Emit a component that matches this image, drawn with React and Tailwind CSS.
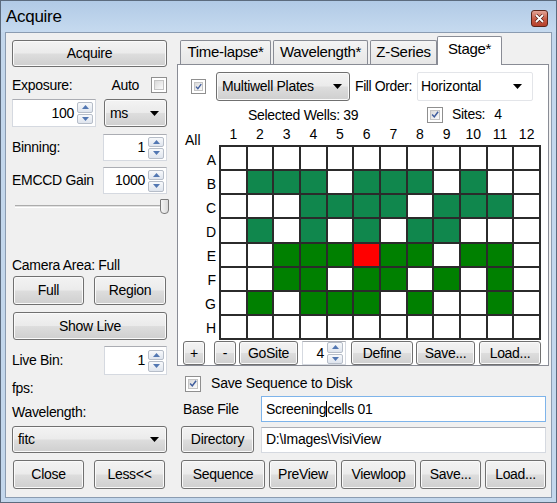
import React from 'react';
import clsx from 'clsx';

const BTN_BG = 'bg-[linear-gradient(#f3f3f3,#ebebeb_48%,#dddddd_52%,#cfcfcf)]';

const Btn = ({ className, children }) => (
  <div
    className={clsx(
      'flex items-center justify-center rounded-[3px] border border-[#707070] shadow-[inset_0_0_0_1px_#fafafa] text-[14px] tracking-[-0.3px] shrink-0',
      BTN_BG,
      className
    )}
  >
    {children}
  </div>
);

const Arrow = () => (
  <svg width="9" height="5" viewBox="0 0 9 5" className="shrink-0">
    <path d="M0 0 L9 0 L4.5 5 Z" fill="#000" />
  </svg>
);

const Combo = ({ className, children }) => (
  <div
    className={clsx(
      'flex items-center justify-between rounded-[3px] border border-[#707070] shadow-[inset_0_0_0_1px_#fafafa] pl-[5px] pr-[7px] text-[14px] tracking-[-0.3px] shrink-0',
      BTN_BG,
      className
    )}
  >
    <span>{children}</span>
    <Arrow />
  </div>
);

const SpinArrows = () => (
  <div className="flex flex-col gap-px w-[16px] h-[22px] shrink-0">
    {[0, 1].map((i) => (
      <div
        key={i}
        className="flex-1 flex items-center justify-center rounded-[2px] border border-[#b6bdc8] bg-[linear-gradient(#f7f9fb,#dfe5ee)]"
      >
        <svg width="7" height="4" viewBox="0 0 7 4">
          <path d={i === 0 ? 'M0 4 L3.5 0 L7 4 Z' : 'M0 0 L7 0 L3.5 4 Z'} fill="#5277b2" />
        </svg>
      </div>
    ))}
  </div>
);

const Spin = ({ value, className }) => (
  <div
    className={clsx(
      'flex items-center justify-end gap-[3px] pr-[2px] border border-[#d5d9e0] border-t-[#abadb3] bg-white text-[14px] tracking-[-0.3px] shrink-0',
      className
    )}
  >
    <span>{value}</span>
    <SpinArrows />
  </div>
);

const Check = ({ checked, size = 'w-[15px] h-[15px]' }) => (
  <div className={clsx('border border-[#8f8f8f] bg-white p-[2px] shrink-0', size)}>
    <div className="w-full h-full border border-[#c4c4c4] bg-[linear-gradient(135deg,#d9d9d9,#fbfbfb)] flex items-center justify-center">
      {checked && (
        <svg width="9" height="9" viewBox="0 0 9 9">
          <path d="M1.3 4.6 L3.7 7.2 L8 1.4" stroke="#3f5d9d" strokeWidth="1.7" fill="none" />
        </svg>
      )}
    </div>
  </div>
);

const Tab = ({ label, active, className }) => (
  <div
    className={clsx(
      'flex items-center justify-center border border-b-0 border-[#898c95] text-[15px] tracking-[-0.3px] shrink-0',
      active
        ? 'h-[29px] bg-white relative z-10 -mb-px rounded-t-[2px] pb-[4px]'
        : 'h-[24px] bg-[linear-gradient(#f4f4f4,#e6e6e6)] rounded-t-[2px]',
      className
    )}
  >
    {label}
  </div>
);

const WELLS = [
  '............',
  '.TTT.TTT.T..',
  '...TTTT.TTT.',
  '.T.T.T.TT...',
  '..GGGRGG.GG.',
  '..GG.GG.G.G.',
  '.G.GGG.G..G.',
  '............',
];

const CELL = { '.': 'bg-white', T: 'bg-[#10874d]', G: 'bg-[#008000]', R: 'bg-[#ff0000]' };

const LEFT = 'text-[14px] tracking-[-0.3px]';

export default function App() {
  return (
    <div className="w-[557px] h-[503px] border border-[#5c6b7e] bg-[#c3d7ec] flex flex-col font-['Liberation_Sans',Arial,sans-serif] text-black overflow-hidden">
      {/* title bar */}
      <div className="h-[31px] flex items-center justify-between pl-[5px] pr-[8px] bg-[linear-gradient(#b1cae6,#c6daef)]">
        <span className="text-[17px] tracking-[-0.3px]">Acquire</span>
        <div className="mt-[3px] w-[17px] h-[17px] rounded-[3px] border border-[#5b2419] bg-[linear-gradient(#e3a496,#c75a44_55%,#b5412c)] flex items-center justify-center">
          <svg width="9" height="9" viewBox="0 0 9 9">
            <path d="M1 1 L8 8 M8 1 L1 8" stroke="#4a1a12" strokeWidth="3.2" />
            <path d="M1 1 L8 8 M8 1 L1 8" stroke="#fff" strokeWidth="1.8" />
          </svg>
        </div>
      </div>

      <div className="mx-[4px] h-[466px] border border-[#8b9cb1] bg-[#f0f0f0] flex">
        {/* left column */}
        <div className="w-[170px] pl-[6px] pr-[9px] flex flex-col shrink-0">
          <Btn className="mt-[7px] h-[27px]">Acquire</Btn>

          <div className={clsx('mt-[9px] h-[18px] flex items-center justify-between', LEFT)}>
            <span>Exposure:</span>
            <div className="flex items-center gap-[12px]">
              <span>Auto</span>
              <Check size="w-[16px] h-[16px]" />
            </div>
          </div>

          <div className="mt-[5px] h-[28px] flex gap-[8px]">
            <Spin value="100" className="w-[84px] h-[28px]" />
            <Combo className="w-[63px] h-[28px]">ms</Combo>
          </div>

          <div className={clsx('mt-[7px] h-[27px] flex items-center justify-between', LEFT)}>
            <span>Binning:</span>
            <Spin value="1" className="w-[64px] h-[27px]" />
          </div>

          <div className={clsx('mt-[6px] h-[27px] flex items-center justify-between', LEFT)}>
            <span>EMCCD Gain</span>
            <Spin value="1000" className="w-[64px] h-[27px]" />
          </div>

          <div className="mt-[4px] h-[16px] flex items-center pl-[3px]">
            <div className="flex-1 h-[3px] border-t border-[#acacac] border-b border-b-white bg-[#e2e2e2]" />
            <div className="-ml-[2px] -mr-[2px] w-[9px] h-[15px] rounded-t-[1px] rounded-b-[4px] border border-[#7b7b7b] bg-[linear-gradient(90deg,#f6f6f6,#dadada)]" />
          </div>

          <div className={clsx('mt-[42px] h-[18px] flex items-center', LEFT)}>Camera Area: Full</div>

          <div className="mt-[2px] h-[29px] flex justify-between pl-px pr-px">
            <Btn className="w-[71px] h-[29px]">Full</Btn>
            <Btn className="w-[72px] h-[29px]">Region</Btn>
          </div>

          <Btn className="mt-[7px] h-[28px] ml-px">Show Live</Btn>

          <div className={clsx('mt-[6px] h-[29px] flex items-center justify-between', LEFT)}>
            <span>Live Bin:</span>
            <Spin value="1" className="w-[63px] h-[29px]" />
          </div>

          <div className={clsx('mt-[5px] h-[16px] flex items-center', LEFT)}>fps:</div>
          <div className={clsx('mt-[7px] h-[18px] flex items-center', LEFT)}>Wavelength:</div>

          <Combo className="mt-[5px] h-[27px]">fitc</Combo>

          <div className="mt-[7px] h-[29px] flex justify-between pl-px pr-[2px]">
            <Btn className="w-[71px] h-[29px]">Close</Btn>
            <Btn className="w-[71px] h-[29px]">Less&lt;&lt;</Btn>
          </div>
        </div>

        {/* right column */}
        <div className="flex-1 flex flex-col pt-[3px]">
          <div className="h-[28px] flex items-end pl-[4px]">
            <Tab label="Time-lapse*" className="w-[91px]" />
            <Tab label="Wavelength*" className="w-[95px] ml-[2px]" />
            <Tab label="Z-Series" className="w-[67px] ml-[2px]" />
            <Tab label="Stage*" active className="w-[65px]" />
          </div>

          <div className="ml-px w-[372px] h-[302px] border border-[#898c95] bg-white flex flex-col">
            <div className="mt-[7px] h-[29px] flex items-center pl-[13px]">
              <Check checked />
              <Combo className="ml-[10px] w-[134px] h-[29px]">Multiwell Plates</Combo>
              <span className="ml-[5px] w-[62px] text-[14px] tracking-[-0.4px] whitespace-nowrap">Fill Order:</span>
              <div className="w-[116px] h-[29px] flex items-center justify-between pl-[3px] pr-[10px] border border-[#e3e5e9] rounded-[2px] bg-white text-[14px] tracking-[-0.3px]">
                <span>Horizontal</span>
                <Arrow />
              </div>
            </div>

            <div className="mt-[5px] h-[17px] flex items-center text-[14px] tracking-[-0.3px]">
              <span className="ml-[70px] w-[179px] translate-y-[1px]">Selected Wells: 39</span>
              <Check checked size="w-[16px] h-[16px]" />
              <span className="ml-[9px]">Sites:</span>
              <span className="ml-[9px]">4</span>
            </div>

            <div className="mt-px flex">
              <div className="w-[41px] flex flex-col shrink-0 text-[14px]">
                <div className="h-[21px] pl-[7px] flex items-end">
                  <span className="translate-y-[6px]">All</span>
                </div>
                <div className="h-[195px] grid grid-rows-8 pr-[3px] pt-[3px]">
                  {'ABCDEFGH'.split('').map((r) => (
                    <div key={r} className="flex items-center justify-end">{r}</div>
                  ))}
                </div>
              </div>
              <div className="w-[322px] flex flex-col">
                <div className="h-[21px] grid grid-cols-12 gap-[2px] px-[2px] text-[14px]">
                  {Array.from({ length: 12 }, (_, i) => (
                    <div key={i} className="flex items-center justify-center pb-[3px]">{i + 1}</div>
                  ))}
                </div>
                <div className="h-[195px] grid grid-cols-12 grid-rows-8 gap-[2px] p-[2px] bg-[#2b2b2b]">
                  {WELLS.map((row, ri) =>
                    row.split('').map((c, ci) => <div key={ri + '-' + ci} className={CELL[c]} />)
                  )}
                </div>
              </div>
            </div>

            <div className="mt-px h-[24px] flex items-stretch pl-[5px]">
              <Btn className="w-[22px]">+</Btn>
              <Btn className="w-[22px] ml-[9px]">-</Btn>
              <Btn className="w-[59px] ml-[3px]">GoSite</Btn>
              <Spin value="4" className="w-[44px] ml-[4px] h-[24px]" />
              <Btn className="w-[62px] ml-[5px]">Define</Btn>
              <Btn className="w-[59px] ml-[3px]">Save...</Btn>
              <Btn className="w-[62px] ml-[4px]">Load...</Btn>
            </div>
          </div>

          <div className="mt-[9px] h-[17px] flex items-center pl-[9px]">
            <Check checked size="w-[16px] h-[16px]" />
            <span className="ml-[10px] text-[14px] tracking-[-0.2px]">Save Sequence to Disk</span>
          </div>

          <div className="mt-[4px] h-[26px] flex items-center">
            <span className="pl-[7px] w-[85px] text-[14px] tracking-[-0.3px]">Base File</span>
            <div className="w-[285px] h-[26px] flex items-center pl-[4px] border border-[#7eb4ea] bg-white text-[14px] tracking-[-0.3px]">
              Screening<span className="inline-block w-px h-[16px] bg-black" />cells 01
            </div>
          </div>

          <div className="mt-[4px] h-[27px] flex items-center">
            <Btn className="ml-[5px] w-[73px] h-[27px]">Directory</Btn>
            <div className="ml-[7px] w-[285px] h-[26px] flex items-center pl-[4px] border border-[#d5d9e0] border-t-[#abadb3] bg-white text-[14px] tracking-[-0.3px]">
              D:\Images\VisiView
            </div>
          </div>

          <div className="mt-[7px] h-[29px] flex pl-[5px] gap-[4px]">
            <Btn className="w-[84px] h-[29px]">Sequence</Btn>
            <Btn className="w-[68px] h-[29px]">PreView</Btn>
            <Btn className="w-[75px] h-[29px]">Viewloop</Btn>
            <Btn className="w-[61px] h-[29px]">Save...</Btn>
            <Btn className="w-[61px] h-[29px]">Load...</Btn>
          </div>
        </div>
      </div>
    </div>
  );
}
